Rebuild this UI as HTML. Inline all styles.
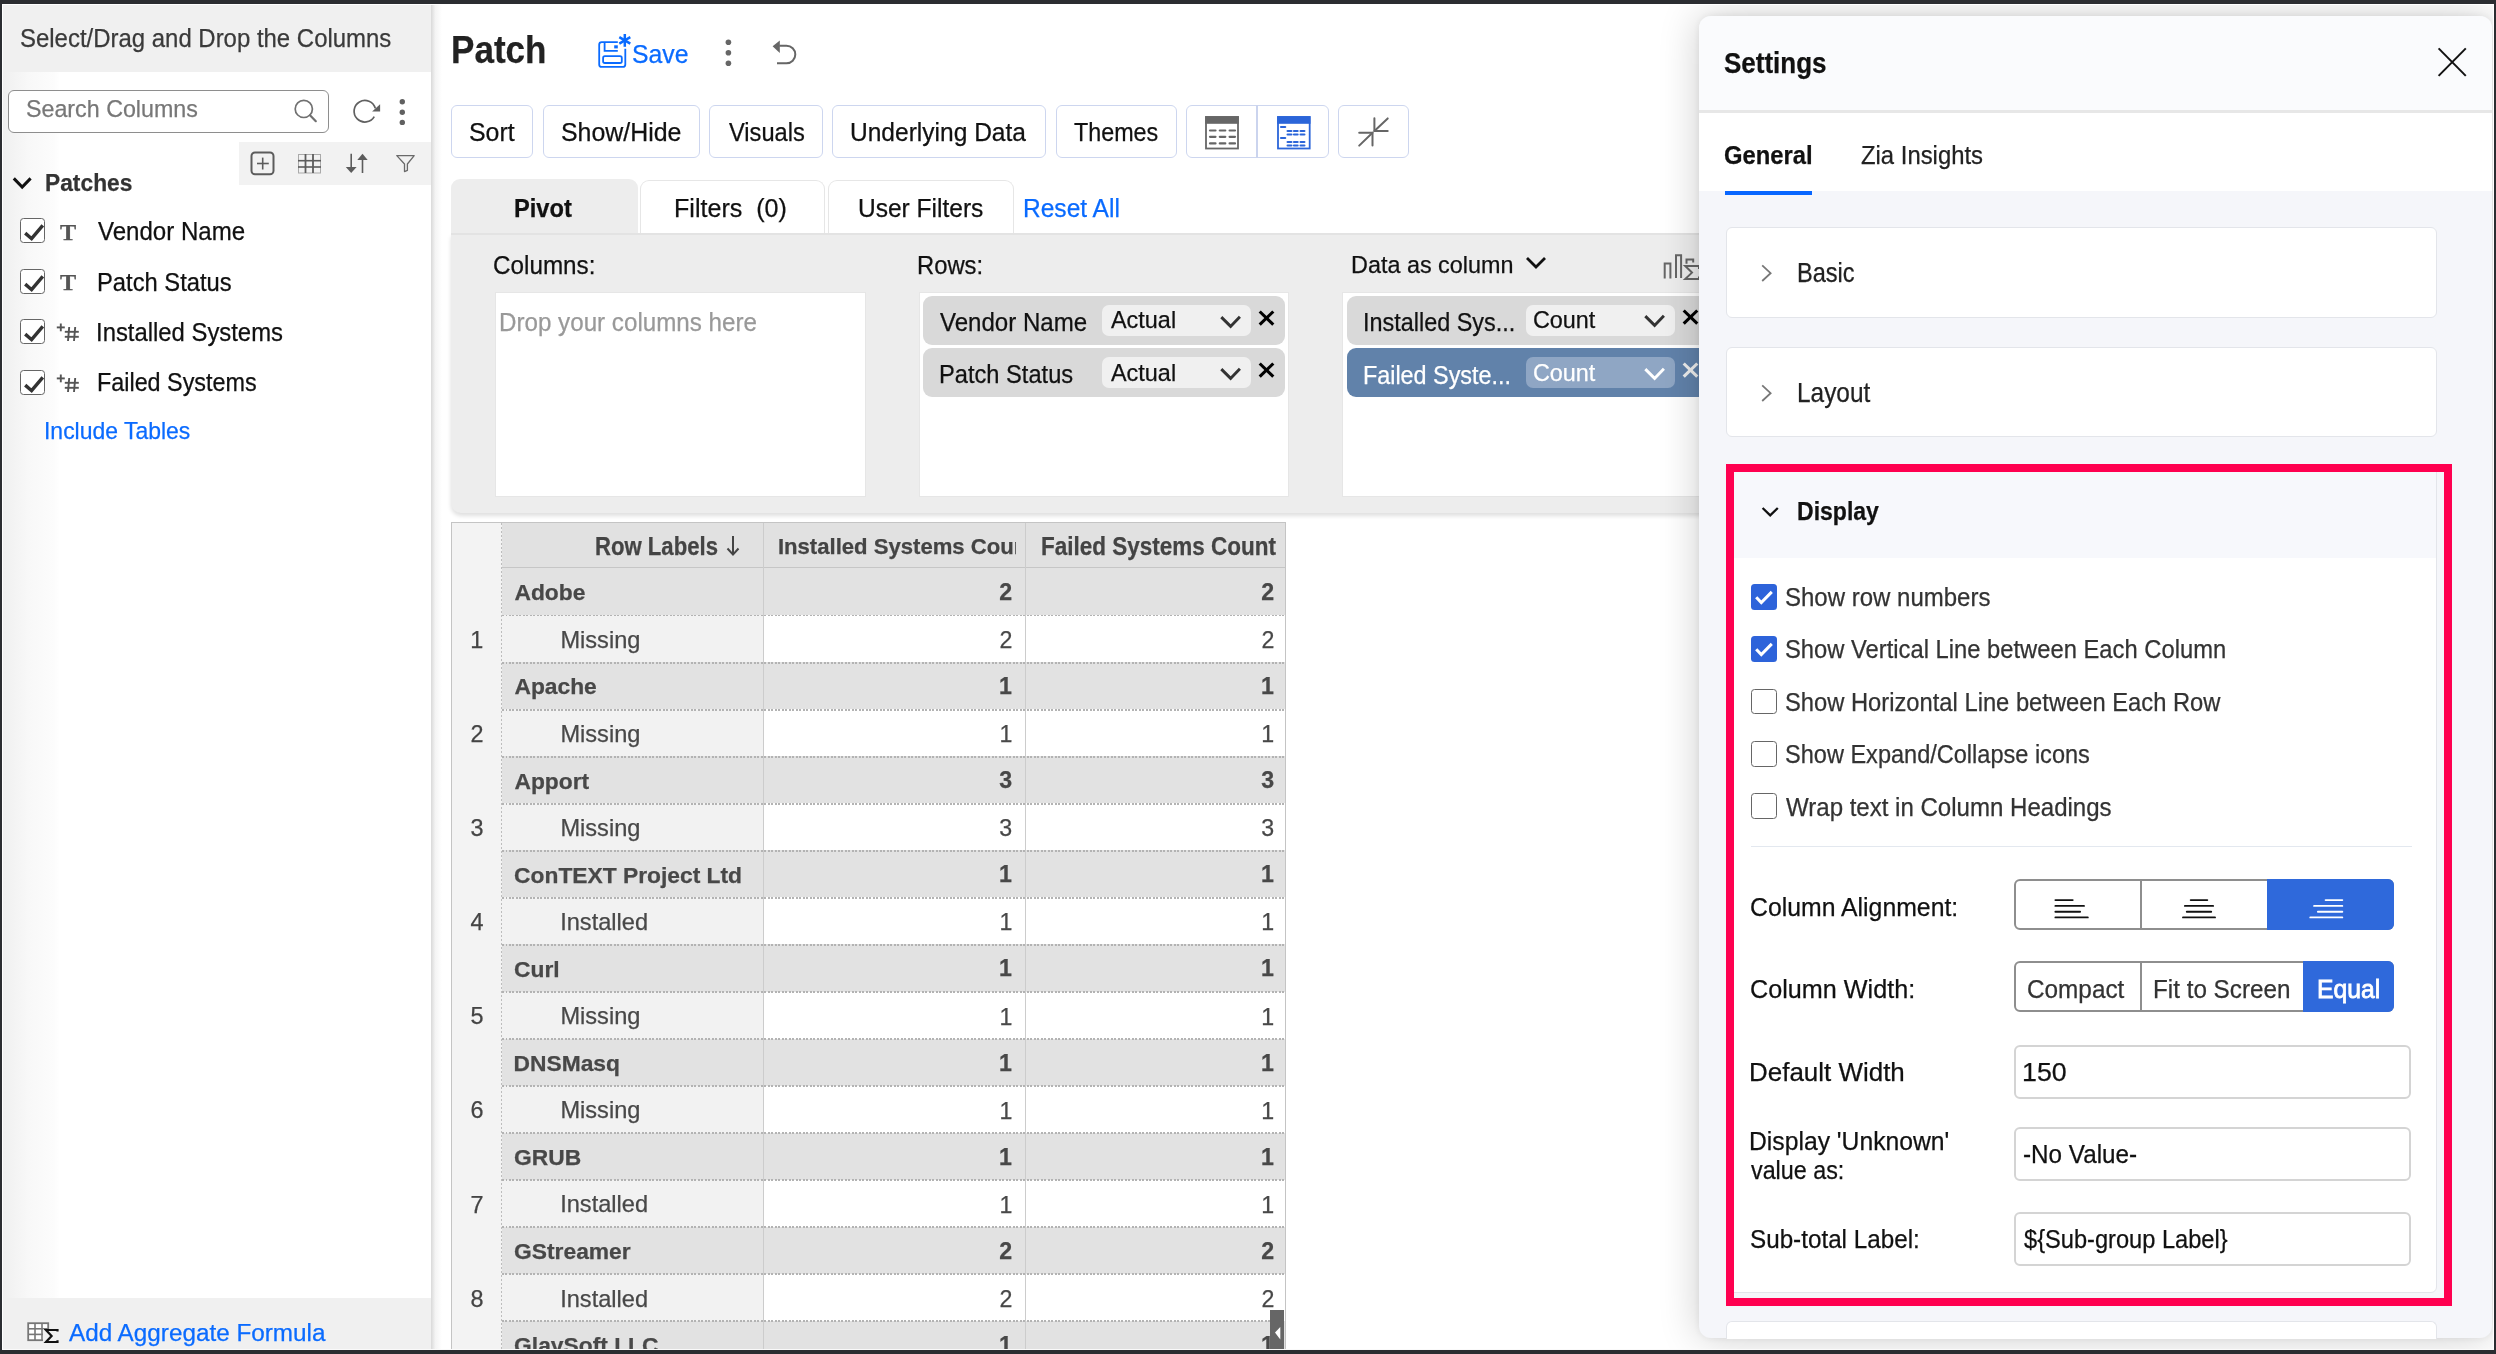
<!DOCTYPE html>
<html><head><meta charset="utf-8"><title>Patch - Pivot Settings</title>
<style>
html,body{margin:0;padding:0;}
body{width:2496px;height:1354px;position:relative;overflow:hidden;background:#fff;font-family:"Liberation Sans",sans-serif;}
#root{position:absolute;left:0;top:0;width:2496px;height:1354px;will-change:transform;}
.r{position:absolute;}
.t{position:absolute;white-space:nowrap;transform-origin:0 0;-webkit-text-stroke:0.25px currentColor;}
</style></head><body><div id="root">
<div class="r" style="left:0.00px;top:0.00px;width:431.00px;height:1354.00px;background:#fff"></div>
<div class="r" style="left:2.00px;top:4.00px;width:429.00px;height:68.00px;background:#f0f0f0"></div>
<div class="r" style="left:2.00px;top:72.00px;width:58.00px;height:1225.60px;background:linear-gradient(to right,#efefef,#f2f2f2 15%,#f8f8f8 45%,#fcfcfc 90%,#fff)"></div>
<div class="t" style="left:20.42px;top:25.75px;font-size:25.58px;line-height:25.58px;color:#3a3a3a;font-weight:normal;font-family:'Liberation Sans', sans-serif;transform:scaleX(0.9361);">Select/Drag and Drop the Columns</div>
<div class="r" style="left:8.00px;top:90.00px;width:320.50px;height:42.50px;border:1.6px solid #8e8e8e;border-radius:6px;box-sizing:border-box;background:#fff"></div>
<div class="t" style="left:25.95px;top:96.78px;font-size:24.71px;line-height:24.71px;color:#777;font-weight:normal;font-family:'Liberation Sans', sans-serif;transform:scaleX(0.9412);">Search Columns</div>
<svg class="r" style="left:292.00px;top:98.00px;width:28.00px;height:26.00px;overflow:visible;" viewBox="0 0 28.00 26.00"><circle cx="11.8" cy="10.9" r="8.6" fill="none" stroke="#707070" stroke-width="1.7"/><line x1="18" y1="17.2" x2="23.8" y2="23.2" stroke="#707070" stroke-width="2.2" stroke-linecap="round"/></svg>
<svg class="r" style="left:350.00px;top:98.00px;width:34.00px;height:28.00px;overflow:visible;" viewBox="0 0 34.00 28.00"><path d="M 24.25 18.6 A 10.8 10.8 0 1 1 25.3 10.4" fill="none" stroke="#606060" stroke-width="1.7"/><polygon points="30.1,6.2 30.1,13.6 22.1,13.6" fill="#606060"/></svg>
<svg class="r" style="left:397.00px;top:96.00px;width:11.00px;height:32.00px;overflow:visible;" viewBox="0 0 11.00 32.00"><circle cx="5.3" cy="5.7" r="2.7" fill="#606060"/><circle cx="5.3" cy="16.2" r="2.7" fill="#606060"/><circle cx="5.3" cy="26.4" r="2.7" fill="#606060"/></svg>
<div class="r" style="left:239.00px;top:142.00px;width:192.00px;height:43.00px;background:#f2f2f2"></div>
<svg class="r" style="left:250.00px;top:151.00px;width:26.00px;height:26.00px;overflow:visible;" viewBox="0 0 26.00 26.00"><rect x="1.5" y="1.5" width="22" height="21.7" rx="3.5" fill="none" stroke="#5c5c5c" stroke-width="2"/><line x1="7" y1="12.5" x2="18.8" y2="12.5" stroke="#5c5c5c" stroke-width="1.6"/><line x1="12.7" y1="6.6" x2="12.7" y2="18.5" stroke="#5c5c5c" stroke-width="1.6"/></svg>
<svg class="r" style="left:298.00px;top:154.00px;width:23.00px;height:19.00px;overflow:visible;" viewBox="0 0 23.00 19.00"><rect x="0.5" y="0.5" width="22" height="18.5" fill="none" stroke="#aaa" stroke-width="1"/><line x1="7.5" y1="0" x2="7.5" y2="19" stroke="#5c5c5c" stroke-width="1.8"/><line x1="15" y1="0" x2="15" y2="19" stroke="#5c5c5c" stroke-width="1.8"/><line x1="0" y1="6.7" x2="23" y2="6.7" stroke="#5c5c5c" stroke-width="1.6"/><line x1="0" y1="13" x2="23" y2="13" stroke="#5c5c5c" stroke-width="1.6"/></svg>
<svg class="r" style="left:344.00px;top:152.00px;width:25.00px;height:24.00px;overflow:visible;" viewBox="0 0 25.00 24.00"><line x1="7.2" y1="1.8" x2="7.2" y2="16" stroke="#5c5c5c" stroke-width="1.6"/><polygon points="1.8,15 12.6,15 7.2,21" fill="#5c5c5c"/><line x1="18.5" y1="7" x2="18.5" y2="21" stroke="#5c5c5c" stroke-width="1.6"/><polygon points="13.3,8 23.7,8 18.5,1.8" fill="#5c5c5c"/></svg>
<svg class="r" style="left:395.00px;top:154.00px;width:21.00px;height:20.00px;overflow:visible;" viewBox="0 0 21.00 20.00"><path d="M 1.8 1.6 L 19.2 1.6 L 12.4 10 L 12.4 16.4 L 9.5 17.6 L 9.5 10 Z" fill="none" stroke="#6a6a6a" stroke-width="1.3" stroke-linejoin="round"/></svg>
<svg class="r" style="left:12.00px;top:176.00px;width:22.00px;height:16.00px;overflow:visible;" viewBox="0 0 22.00 16.00"><polyline points="1.8,2.4 10.2,11 18.6,2.4" fill="none" stroke="#111" stroke-width="3"/></svg>
<div class="t" style="left:45.02px;top:170.88px;font-size:24.71px;line-height:24.71px;color:#333;font-weight:bold;font-family:'Liberation Sans', sans-serif;transform:scaleX(0.9223);">Patches</div>
<div class="r" style="left:19.50px;top:218.10px;width:25.70px;height:25.30px;border:1.7px solid #666;border-radius:3.5px;box-sizing:border-box;background:#fff"></div>
<svg class="r" style="left:19.50px;top:218.10px;width:25.70px;height:25.30px;overflow:visible;" viewBox="0 0 25.70 25.30"><polyline points="5.2,15.1 11.6,20.7 22.8,7.3" fill="none" stroke="#333" stroke-width="3.4"/></svg>
<div class="t" style="left:59.94px;top:221.63px;font-size:22.53px;line-height:22.53px;color:#555;font-weight:bold;font-family:'Liberation Serif', serif;transform:scaleX(1.0765);">T</div>
<div class="t" style="left:98.38px;top:219.19px;font-size:25.29px;line-height:25.29px;color:#111;font-weight:normal;font-family:'Liberation Sans', sans-serif;transform:scaleX(0.9518);">Vendor Name</div>
<div class="r" style="left:19.50px;top:268.65px;width:25.70px;height:25.30px;border:1.7px solid #666;border-radius:3.5px;box-sizing:border-box;background:#fff"></div>
<svg class="r" style="left:19.50px;top:268.65px;width:25.70px;height:25.30px;overflow:visible;" viewBox="0 0 25.70 25.30"><polyline points="5.2,15.1 11.6,20.7 22.8,7.3" fill="none" stroke="#333" stroke-width="3.4"/></svg>
<div class="t" style="left:59.94px;top:272.18px;font-size:22.53px;line-height:22.53px;color:#555;font-weight:bold;font-family:'Liberation Serif', serif;transform:scaleX(1.0765);">T</div>
<div class="t" style="left:96.60px;top:269.59px;font-size:25.29px;line-height:25.29px;color:#111;font-weight:normal;font-family:'Liberation Sans', sans-serif;transform:scaleX(0.9396);">Patch Status</div>
<div class="r" style="left:19.50px;top:319.20px;width:25.70px;height:25.30px;border:1.7px solid #666;border-radius:3.5px;box-sizing:border-box;background:#fff"></div>
<svg class="r" style="left:19.50px;top:319.20px;width:25.70px;height:25.30px;overflow:visible;" viewBox="0 0 25.70 25.30"><polyline points="5.2,15.1 11.6,20.7 22.8,7.3" fill="none" stroke="#333" stroke-width="3.4"/></svg>
<svg class="r" style="left:55.00px;top:319.20px;width:25.00px;height:25.00px;overflow:visible;" viewBox="0 0 25.00 25.00"><g stroke="#555" stroke-width="1.9"><line x1="1.8" y1="8.4" x2="9.8" y2="8.4"/><line x1="5.8" y1="4.5" x2="5.8" y2="12.3"/><line x1="14.2" y1="8" x2="13" y2="22"/><line x1="20.2" y1="8" x2="19" y2="22"/><line x1="9.8" y1="12.8" x2="23.8" y2="12.8"/><line x1="9.8" y1="17.8" x2="23.8" y2="17.8"/></g></svg>
<div class="t" style="left:96.35px;top:319.99px;font-size:25.29px;line-height:25.29px;color:#111;font-weight:normal;font-family:'Liberation Sans', sans-serif;transform:scaleX(0.9436);">Installed Systems</div>
<div class="r" style="left:19.50px;top:369.75px;width:25.70px;height:25.30px;border:1.7px solid #666;border-radius:3.5px;box-sizing:border-box;background:#fff"></div>
<svg class="r" style="left:19.50px;top:369.75px;width:25.70px;height:25.30px;overflow:visible;" viewBox="0 0 25.70 25.30"><polyline points="5.2,15.1 11.6,20.7 22.8,7.3" fill="none" stroke="#333" stroke-width="3.4"/></svg>
<svg class="r" style="left:55.00px;top:369.75px;width:25.00px;height:25.00px;overflow:visible;" viewBox="0 0 25.00 25.00"><g stroke="#555" stroke-width="1.9"><line x1="1.8" y1="8.4" x2="9.8" y2="8.4"/><line x1="5.8" y1="4.5" x2="5.8" y2="12.3"/><line x1="14.2" y1="8" x2="13" y2="22"/><line x1="20.2" y1="8" x2="19" y2="22"/><line x1="9.8" y1="12.8" x2="23.8" y2="12.8"/><line x1="9.8" y1="17.8" x2="23.8" y2="17.8"/></g></svg>
<div class="t" style="left:96.63px;top:370.39px;font-size:25.29px;line-height:25.29px;color:#111;font-weight:normal;font-family:'Liberation Sans', sans-serif;transform:scaleX(0.9238);">Failed Systems</div>
<div class="t" style="left:43.84px;top:419.08px;font-size:24.71px;line-height:24.71px;color:#0a6bff;font-weight:normal;font-family:'Liberation Sans', sans-serif;transform:scaleX(0.9286);">Include Tables</div>
<div class="r" style="left:2.00px;top:1297.60px;width:429.00px;height:52.40px;background:#f0f0f0"></div>
<svg class="r" style="left:27.00px;top:1322.00px;width:33.00px;height:21.00px;overflow:visible;" viewBox="0 0 33.00 21.00"><rect x="1.2" y="1.2" width="20" height="17" fill="#fff" stroke="#777" stroke-width="1.8"/><line x1="8" y1="1" x2="8" y2="18" stroke="#777" stroke-width="1.6"/><line x1="15" y1="1" x2="15" y2="18" stroke="#777" stroke-width="1.6"/><line x1="1" y1="6.8" x2="21" y2="6.8" stroke="#777" stroke-width="1.6"/><line x1="1" y1="12.4" x2="21" y2="12.4" stroke="#777" stroke-width="1.6"/><rect x="16" y="7" width="16" height="14" fill="#f0f0f0"/><path d="M 30.5 9.6 L 30.5 8 L 19 8 L 24.6 14 L 19 20 L 30.5 20 L 30.5 18.2" fill="none" stroke="#111" stroke-width="2.2"/></svg>
<div class="t" style="left:68.70px;top:1321.03px;font-size:24.42px;line-height:24.42px;color:#0a6bff;font-weight:normal;font-family:'Liberation Sans', sans-serif;transform:scaleX(0.9947);">Add Aggregate Formula</div>
<div class="r" style="left:431.00px;top:4.00px;width:11.00px;height:1346.00px;background:linear-gradient(to right,#d9d9d9,#f4f4f4 40%,#fff)"></div>
<div class="t" style="left:451.32px;top:31.36px;font-size:38.08px;line-height:38.08px;color:#222;font-weight:bold;font-family:'Liberation Sans', sans-serif;transform:scaleX(0.9209);">Patch</div>
<svg class="r" style="left:596.00px;top:32.00px;width:38.00px;height:38.00px;overflow:visible;" viewBox="0 0 38.00 38.00"><g fill="none" stroke="#0a6bff" stroke-width="1.8"><path d="M 21.8 10.1 L 5.7 10.1 Q 3.2 10.1 3.2 12.6 L 3.2 32.4 Q 3.2 34.9 5.7 34.9 L 26.8 34.9 Q 29.3 34.9 29.3 32.4 L 29.3 16.8"/><polyline points="8.6,10.1 8.6,18.8 21.8,18.8"/><rect x="7.1" y="24.2" width="18.7" height="6.8" rx="1.8"/></g><rect x="18.2" y="13.3" width="3.6" height="3.1" fill="#0a6bff"/><g stroke="#0a6bff" stroke-width="2.5"><line x1="28.8" y1="2" x2="28.8" y2="14.8"/><line x1="23.3" y1="5.2" x2="34.3" y2="11.6"/><line x1="23.3" y1="11.6" x2="34.3" y2="5.2"/></g></svg>
<div class="t" style="left:632.28px;top:41.75px;font-size:25.58px;line-height:25.58px;color:#0a6bff;font-weight:normal;font-family:'Liberation Sans', sans-serif;transform:scaleX(0.9692);">Save</div>
<svg class="r" style="left:722.00px;top:36.00px;width:13.00px;height:34.00px;overflow:visible;" viewBox="0 0 13.00 34.00"><circle cx="6.4" cy="6.2" r="2.8" fill="#666"/><circle cx="6.4" cy="16.8" r="2.8" fill="#666"/><circle cx="6.4" cy="27.3" r="2.8" fill="#666"/></svg>
<svg class="r" style="left:770.00px;top:36.00px;width:30.00px;height:32.00px;overflow:visible;" viewBox="0 0 30.00 32.00"><path d="M 9.3 9.7 L 16.5 9.7 A 8.8 8.8 0 0 1 16.5 27.3 L 7 27.3" fill="none" stroke="#666" stroke-width="2"/><polygon points="2.6,10.2 9.8,4.6 9.8,16.9" fill="#666"/></svg>
<div class="r" style="left:450.70px;top:105.30px;width:82.70px;height:53.20px;border:1.9px solid #cdd6ef;border-radius:6px;box-sizing:border-box;background:#fff"></div>
<div class="t" style="left:468.58px;top:120.09px;font-size:25.29px;line-height:25.29px;color:#111;font-weight:normal;font-family:'Liberation Sans', sans-serif;transform:scaleX(0.9841);">Sort</div>
<div class="r" style="left:543.30px;top:105.30px;width:156.50px;height:53.20px;border:1.9px solid #cdd6ef;border-radius:6px;box-sizing:border-box;background:#fff"></div>
<div class="t" style="left:560.88px;top:120.09px;font-size:25.29px;line-height:25.29px;color:#111;font-weight:normal;font-family:'Liberation Sans', sans-serif;transform:scaleX(0.9850);">Show/Hide</div>
<div class="r" style="left:709.20px;top:105.30px;width:113.60px;height:53.20px;border:1.9px solid #cdd6ef;border-radius:6px;box-sizing:border-box;background:#fff"></div>
<div class="t" style="left:728.68px;top:120.09px;font-size:25.29px;line-height:25.29px;color:#111;font-weight:normal;font-family:'Liberation Sans', sans-serif;transform:scaleX(0.9357);">Visuals</div>
<div class="r" style="left:832.00px;top:105.30px;width:214.00px;height:53.20px;border:1.9px solid #cdd6ef;border-radius:6px;box-sizing:border-box;background:#fff"></div>
<div class="t" style="left:850.46px;top:120.09px;font-size:25.29px;line-height:25.29px;color:#111;font-weight:normal;font-family:'Liberation Sans', sans-serif;transform:scaleX(0.9708);">Underlying Data</div>
<div class="r" style="left:1055.60px;top:105.30px;width:121.40px;height:53.20px;border:1.9px solid #cdd6ef;border-radius:6px;box-sizing:border-box;background:#fff"></div>
<div class="t" style="left:1073.93px;top:120.09px;font-size:25.29px;line-height:25.29px;color:#111;font-weight:normal;font-family:'Liberation Sans', sans-serif;transform:scaleX(0.9220);">Themes</div>
<div class="r" style="left:1186.40px;top:105.30px;width:142.20px;height:53.20px;border:1.9px solid #cdd6ef;border-radius:6px;box-sizing:border-box;background:#fff"></div>
<div class="r" style="left:1256.20px;top:105.30px;width:1.60px;height:53.20px;background:#cbd4ee"></div>
<svg class="r" style="left:1205.00px;top:115.50px;width:34.00px;height:33.50px;overflow:visible;" viewBox="0 0 34.00 33.50"><rect x="1" y="1" width="32" height="31.5" fill="#fff" stroke="#666" stroke-width="1.8"/><rect x="0.2" y="0.2" width="33.6" height="7.6" fill="#666"/><g stroke="#666" stroke-width="2.2" stroke-linecap="round"><line x1="5" y1="14.5" x2="10.5" y2="14.5"/><line x1="14.8" y1="14.5" x2="20.3" y2="14.5"/><line x1="24.6" y1="14.5" x2="30" y2="14.5"/><line x1="5" y1="20.8" x2="10.5" y2="20.8"/><line x1="14.8" y1="20.8" x2="20.3" y2="20.8"/><line x1="24.6" y1="20.8" x2="30" y2="20.8"/><line x1="5" y1="27.4" x2="10.5" y2="27.4"/><line x1="14.8" y1="27.4" x2="20.3" y2="27.4"/><line x1="24.6" y1="27.4" x2="30" y2="27.4"/></g></svg>
<svg class="r" style="left:1276.80px;top:115.50px;width:33.70px;height:33.50px;overflow:visible;" viewBox="0 0 33.70 33.50"><rect x="1" y="1" width="31.7" height="31.5" fill="#fff" stroke="#2b65d9" stroke-width="1.8"/><rect x="0.2" y="0.2" width="33.3" height="7.6" fill="#2b65d9"/><g stroke="#2b65d9" stroke-width="2.2" stroke-linecap="round"><line x1="4" y1="11" x2="8.2" y2="11"/><line x1="10.6" y1="15" x2="14.4" y2="15"/><line x1="17" y1="15" x2="20.6" y2="15"/><line x1="23.6" y1="15" x2="27.4" y2="15"/><line x1="10.6" y1="18.5" x2="14.4" y2="18.5"/><line x1="17" y1="18.5" x2="20.6" y2="18.5"/><line x1="23.6" y1="18.5" x2="27.4" y2="18.5"/><line x1="4" y1="22" x2="8.2" y2="22"/><line x1="10.6" y1="26" x2="14.4" y2="26"/><line x1="17" y1="26" x2="20.6" y2="26"/><line x1="23.6" y1="26" x2="27.4" y2="26"/><line x1="10.6" y1="29.5" x2="14.4" y2="29.5"/><line x1="17" y1="29.5" x2="20.6" y2="29.5"/><line x1="23.6" y1="29.5" x2="27.4" y2="29.5"/></g></svg>
<div class="r" style="left:1338.40px;top:105.30px;width:70.30px;height:53.20px;border:1.9px solid #cdd6ef;border-radius:6px;box-sizing:border-box;background:#fff"></div>
<svg class="r" style="left:1357.00px;top:116.00px;width:33.00px;height:32.00px;overflow:visible;" viewBox="0 0 33.00 32.00"><g stroke="#666" stroke-width="2" stroke-linecap="round" fill="none"><line x1="2.2" y1="29.6" x2="15.5" y2="16.7"/><polyline points="2.2,16.7 15.5,16.7 15.5,29.6"/><line x1="30.7" y1="2.4" x2="17.4" y2="14.9"/><polyline points="17.4,2.2 17.4,14.9 30.7,14.9"/></g></svg>
<div class="r" style="left:451.00px;top:178.50px;width:187.00px;height:57.50px;background:#ededed;border-radius:9px 9px 0 0"></div>
<div class="r" style="left:640.00px;top:180.40px;width:185.40px;height:55.60px;background:#fff;border:1.9px solid #e6e6e6;border-bottom:none;border-radius:9px 9px 0 0;box-sizing:border-box"></div>
<div class="r" style="left:828.00px;top:180.40px;width:186.40px;height:55.60px;background:#fff;border:1.9px solid #e6e6e6;border-bottom:none;border-radius:9px 9px 0 0;box-sizing:border-box"></div>
<div class="t" style="left:514.46px;top:195.89px;font-size:25.29px;line-height:25.29px;color:#111;font-weight:bold;font-family:'Liberation Sans', sans-serif;transform:scaleX(0.9363);">Pivot</div>
<div class="t" style="left:674.39px;top:195.89px;font-size:25.29px;line-height:25.29px;color:#111;font-weight:normal;font-family:'Liberation Sans', sans-serif;transform:scaleX(0.9924);white-space:pre;">Filters  (0)</div>
<div class="t" style="left:857.66px;top:195.89px;font-size:25.29px;line-height:25.29px;color:#111;font-weight:normal;font-family:'Liberation Sans', sans-serif;transform:scaleX(0.9703);">User Filters</div>
<div class="t" style="left:1022.64px;top:195.89px;font-size:25.29px;line-height:25.29px;color:#0a6bff;font-weight:normal;font-family:'Liberation Sans', sans-serif;transform:scaleX(0.9708);">Reset All</div>
<div class="r" style="left:451.00px;top:233.50px;width:1309.00px;height:279.50px;background:#ededed;border-radius:0 0 10px 10px;box-shadow:0 3px 4px rgba(0,0,0,0.13)"></div>
<div class="r" style="left:451.00px;top:233.00px;width:1309.00px;height:2.20px;background:#e3e3e3"></div>
<div class="t" style="left:492.99px;top:252.75px;font-size:25.58px;line-height:25.58px;color:#111;font-weight:normal;font-family:'Liberation Sans', sans-serif;transform:scaleX(0.9485);">Columns:</div>
<div class="t" style="left:916.70px;top:252.75px;font-size:25.58px;line-height:25.58px;color:#111;font-weight:normal;font-family:'Liberation Sans', sans-serif;transform:scaleX(0.9304);">Rows:</div>
<div class="r" style="left:494.70px;top:292.00px;width:371.00px;height:205.00px;background:#fff;border:1px solid #e6e6e6;box-sizing:border-box"></div>
<div class="t" style="left:498.87px;top:309.59px;font-size:25.29px;line-height:25.29px;color:#999;font-weight:normal;font-family:'Liberation Sans', sans-serif;transform:scaleX(0.9562);">Drop your columns here</div>
<div class="r" style="left:918.60px;top:292.00px;width:370.70px;height:205.00px;background:#fff;border:1px solid #e6e6e6;box-sizing:border-box"></div>
<div class="r" style="left:923.00px;top:296.20px;width:362.30px;height:48.40px;background:#d9d9d9;border-radius:9px"></div>
<div class="t" style="left:940.38px;top:310.39px;font-size:25.29px;line-height:25.29px;color:#111;font-weight:normal;font-family:'Liberation Sans', sans-serif;transform:scaleX(0.9518);">Vendor Name</div>
<div class="r" style="left:1102.40px;top:304.70px;width:148.80px;height:31.20px;background:#f0f0f0;border-radius:7px"></div>
<div class="t" style="left:1111.00px;top:308.48px;font-size:24.71px;line-height:24.71px;color:#111;font-weight:normal;font-family:'Liberation Sans', sans-serif;transform:scaleX(0.9483);">Actual</div>
<svg class="r" style="left:1218.00px;top:314.20px;width:25.00px;height:15.00px;overflow:visible;" viewBox="0 0 25.00 15.00"><polyline points="3.3,3.1 12.6,12.4 21.9,2.7" fill="none" stroke="#333" stroke-width="2.9"/></svg>
<svg class="r" style="left:1256.00px;top:309.20px;width:21.00px;height:19.00px;overflow:visible;" viewBox="0 0 21.00 19.00"><g stroke="#000" stroke-width="3.1"><line x1="3.7" y1="2.5" x2="17.3" y2="15.6"/><line x1="17.3" y1="2.5" x2="3.7" y2="15.6"/></g></svg>
<div class="r" style="left:923.00px;top:348.30px;width:362.30px;height:48.40px;background:#d9d9d9;border-radius:9px"></div>
<div class="t" style="left:938.61px;top:362.49px;font-size:25.29px;line-height:25.29px;color:#111;font-weight:normal;font-family:'Liberation Sans', sans-serif;transform:scaleX(0.9360);">Patch Status</div>
<div class="r" style="left:1102.40px;top:356.80px;width:148.80px;height:31.20px;background:#f0f0f0;border-radius:7px"></div>
<div class="t" style="left:1111.00px;top:360.58px;font-size:24.71px;line-height:24.71px;color:#111;font-weight:normal;font-family:'Liberation Sans', sans-serif;transform:scaleX(0.9483);">Actual</div>
<svg class="r" style="left:1218.00px;top:366.30px;width:25.00px;height:15.00px;overflow:visible;" viewBox="0 0 25.00 15.00"><polyline points="3.3,3.1 12.6,12.4 21.9,2.7" fill="none" stroke="#333" stroke-width="2.9"/></svg>
<svg class="r" style="left:1256.00px;top:361.30px;width:21.00px;height:19.00px;overflow:visible;" viewBox="0 0 21.00 19.00"><g stroke="#000" stroke-width="3.1"><line x1="3.7" y1="2.5" x2="17.3" y2="15.6"/><line x1="17.3" y1="2.5" x2="3.7" y2="15.6"/></g></svg>
<div class="t" style="left:1350.93px;top:252.58px;font-size:24.13px;line-height:24.13px;color:#111;font-weight:normal;font-family:'Liberation Sans', sans-serif;transform:scaleX(0.9691);">Data as column</div>
<svg class="r" style="left:1524.00px;top:255.00px;width:24.00px;height:18.00px;overflow:visible;" viewBox="0 0 24.00 18.00"><polyline points="3,3 12,12 21,3" fill="none" stroke="#111" stroke-width="2.8"/></svg>
<svg class="r" style="left:1662.00px;top:252.00px;width:38.00px;height:30.00px;overflow:visible;" viewBox="0 0 38.00 30.00"><g fill="none" stroke="#666" stroke-width="2"><polyline points="2.7,26.5 2.7,11.4 8.4,11.4 8.4,26.5"/><polyline points="14,26 14,3.2 19.1,3.2 19.1,26"/><path d="M 37 17 L 37 14 L 23.2 14 L 30 20.6 L 23.2 27.1 L 37 27.1 L 37 24.5"/><polyline points="24.5,11.8 24.5,7.6 31.2,7.6 31.2,10.5"/></g></svg>
<div class="r" style="left:1342.00px;top:292.00px;width:418.00px;height:205.00px;background:#fff;border:1px solid #e6e6e6;box-sizing:border-box"></div>
<div class="r" style="left:1347.00px;top:295.80px;width:413.00px;height:48.80px;background:#d9d9d9;border-radius:9px"></div>
<div class="t" style="left:1363.09px;top:310.39px;font-size:25.29px;line-height:25.29px;color:#111;font-weight:normal;font-family:'Liberation Sans', sans-serif;transform:scaleX(0.9259);">Installed Sys...</div>
<div class="r" style="left:1526.00px;top:304.50px;width:149.00px;height:31.20px;background:#f0f0f0;border-radius:7px"></div>
<div class="t" style="left:1533.43px;top:308.48px;font-size:24.71px;line-height:24.71px;color:#111;font-weight:normal;font-family:'Liberation Sans', sans-serif;transform:scaleX(0.9459);">Count</div>
<svg class="r" style="left:1642.00px;top:313.00px;width:25.00px;height:15.00px;overflow:visible;" viewBox="0 0 25.00 15.00"><polyline points="3.3,3.1 12.6,12.4 21.9,2.7" fill="none" stroke="#333" stroke-width="2.9"/></svg>
<svg class="r" style="left:1680.00px;top:308.00px;width:21.00px;height:19.00px;overflow:visible;" viewBox="0 0 21.00 19.00"><g stroke="#000" stroke-width="3.1"><line x1="3.7" y1="2.5" x2="17.3" y2="15.6"/><line x1="17.3" y1="2.5" x2="3.7" y2="15.6"/></g></svg>
<div class="r" style="left:1347.00px;top:348.30px;width:413.00px;height:48.40px;background:#6182aa;border-radius:9px"></div>
<div class="t" style="left:1363.33px;top:362.59px;font-size:25.29px;line-height:25.29px;color:#fff;font-weight:normal;font-family:'Liberation Sans', sans-serif;transform:scaleX(0.9236);">Failed Syste...</div>
<div class="r" style="left:1526.00px;top:357.00px;width:149.00px;height:31.20px;background:#8fa6c4;border-radius:7px"></div>
<div class="t" style="left:1533.43px;top:360.88px;font-size:24.71px;line-height:24.71px;color:#fff;font-weight:normal;font-family:'Liberation Sans', sans-serif;transform:scaleX(0.9459);">Count</div>
<svg class="r" style="left:1642.00px;top:365.50px;width:25.00px;height:15.00px;overflow:visible;" viewBox="0 0 25.00 15.00"><polyline points="3.3,3.1 12.6,12.4 21.9,2.7" fill="none" stroke="#fff" stroke-width="2.9"/></svg>
<svg class="r" style="left:1680.00px;top:360.50px;width:21.00px;height:19.00px;overflow:visible;" viewBox="0 0 21.00 19.00"><g stroke="#eee" stroke-width="3.1"><line x1="3.7" y1="2.5" x2="17.3" y2="15.6"/><line x1="17.3" y1="2.5" x2="3.7" y2="15.6"/></g></svg>
<div class="r" style="left:450.70px;top:522.40px;width:835.80px;height:831.60px;background:#fff;border:1px solid #c4c4c4;border-bottom:none;box-sizing:border-box"></div>
<div class="r" style="left:451.70px;top:523.40px;width:50.00px;height:830.60px;background:#f3f3f3"></div>
<div class="r" style="left:501.70px;top:523.40px;width:783.80px;height:44.60px;background:#e1e1e1"></div>
<div class="r" style="left:501.70px;top:568.00px;width:783.80px;height:47.06px;background:#e2e2e2"></div>
<div class="t" style="left:514.43px;top:581.30px;font-size:22.80px;line-height:22.80px;color:#484848;font-weight:bold;font-family:'Liberation Sans', sans-serif;">Adobe</div>
<div class="t" style="left:999.35px;top:580.96px;font-size:23.20px;line-height:23.20px;color:#484848;font-weight:bold;font-family:'Liberation Sans', sans-serif;">2</div>
<div class="t" style="left:1261.25px;top:580.96px;font-size:23.20px;line-height:23.20px;color:#484848;font-weight:bold;font-family:'Liberation Sans', sans-serif;">2</div>
<div class="r" style="left:501.70px;top:615.06px;width:261.30px;height:47.06px;background:#f2f2f2"></div>
<div class="t" style="left:560.41px;top:628.68px;font-size:23.60px;line-height:23.60px;color:#484848;font-weight:normal;font-family:'Liberation Sans', sans-serif;">Missing</div>
<div class="t" style="left:999.58px;top:629.02px;font-size:23.20px;line-height:23.20px;color:#484848;font-weight:normal;font-family:'Liberation Sans', sans-serif;">2</div>
<div class="t" style="left:1261.48px;top:629.02px;font-size:23.20px;line-height:23.20px;color:#484848;font-weight:normal;font-family:'Liberation Sans', sans-serif;">2</div>
<div class="t" style="left:470.16px;top:628.85px;font-size:23.40px;line-height:23.40px;color:#444;font-weight:normal;font-family:'Liberation Sans', sans-serif;">1</div>
<div class="r" style="left:501.70px;top:662.12px;width:783.80px;height:47.06px;background:#e2e2e2"></div>
<div class="t" style="left:514.43px;top:675.42px;font-size:22.80px;line-height:22.80px;color:#484848;font-weight:bold;font-family:'Liberation Sans', sans-serif;">Apache</div>
<div class="t" style="left:999.00px;top:675.08px;font-size:23.20px;line-height:23.20px;color:#484848;font-weight:bold;font-family:'Liberation Sans', sans-serif;">1</div>
<div class="t" style="left:1260.90px;top:675.08px;font-size:23.20px;line-height:23.20px;color:#484848;font-weight:bold;font-family:'Liberation Sans', sans-serif;">1</div>
<div class="r" style="left:501.70px;top:709.18px;width:261.30px;height:47.06px;background:#f2f2f2"></div>
<div class="t" style="left:560.41px;top:722.80px;font-size:23.60px;line-height:23.60px;color:#484848;font-weight:normal;font-family:'Liberation Sans', sans-serif;">Missing</div>
<div class="t" style="left:999.47px;top:723.14px;font-size:23.20px;line-height:23.20px;color:#484848;font-weight:normal;font-family:'Liberation Sans', sans-serif;">1</div>
<div class="t" style="left:1261.37px;top:723.14px;font-size:23.20px;line-height:23.20px;color:#484848;font-weight:normal;font-family:'Liberation Sans', sans-serif;">1</div>
<div class="t" style="left:470.51px;top:722.97px;font-size:23.40px;line-height:23.40px;color:#444;font-weight:normal;font-family:'Liberation Sans', sans-serif;">2</div>
<div class="r" style="left:501.70px;top:756.24px;width:783.80px;height:47.06px;background:#e2e2e2"></div>
<div class="t" style="left:514.43px;top:769.54px;font-size:22.80px;line-height:22.80px;color:#484848;font-weight:bold;font-family:'Liberation Sans', sans-serif;">Apport</div>
<div class="t" style="left:999.24px;top:769.20px;font-size:23.20px;line-height:23.20px;color:#484848;font-weight:bold;font-family:'Liberation Sans', sans-serif;">3</div>
<div class="t" style="left:1261.14px;top:769.20px;font-size:23.20px;line-height:23.20px;color:#484848;font-weight:bold;font-family:'Liberation Sans', sans-serif;">3</div>
<div class="r" style="left:501.70px;top:803.30px;width:261.30px;height:47.06px;background:#f2f2f2"></div>
<div class="t" style="left:560.41px;top:816.92px;font-size:23.60px;line-height:23.60px;color:#484848;font-weight:normal;font-family:'Liberation Sans', sans-serif;">Missing</div>
<div class="t" style="left:999.35px;top:817.26px;font-size:23.20px;line-height:23.20px;color:#484848;font-weight:normal;font-family:'Liberation Sans', sans-serif;">3</div>
<div class="t" style="left:1261.25px;top:817.26px;font-size:23.20px;line-height:23.20px;color:#484848;font-weight:normal;font-family:'Liberation Sans', sans-serif;">3</div>
<div class="t" style="left:470.51px;top:817.09px;font-size:23.40px;line-height:23.40px;color:#444;font-weight:normal;font-family:'Liberation Sans', sans-serif;">3</div>
<div class="r" style="left:501.70px;top:850.36px;width:783.80px;height:47.06px;background:#e2e2e2"></div>
<div class="t" style="left:514.09px;top:863.66px;font-size:22.80px;line-height:22.80px;color:#484848;font-weight:bold;font-family:'Liberation Sans', sans-serif;">ConTEXT Project Ltd</div>
<div class="t" style="left:999.00px;top:863.32px;font-size:23.20px;line-height:23.20px;color:#484848;font-weight:bold;font-family:'Liberation Sans', sans-serif;">1</div>
<div class="t" style="left:1260.90px;top:863.32px;font-size:23.20px;line-height:23.20px;color:#484848;font-weight:bold;font-family:'Liberation Sans', sans-serif;">1</div>
<div class="r" style="left:501.70px;top:897.42px;width:261.30px;height:47.06px;background:#f2f2f2"></div>
<div class="t" style="left:560.18px;top:911.04px;font-size:23.60px;line-height:23.60px;color:#484848;font-weight:normal;font-family:'Liberation Sans', sans-serif;">Installed</div>
<div class="t" style="left:999.47px;top:911.38px;font-size:23.20px;line-height:23.20px;color:#484848;font-weight:normal;font-family:'Liberation Sans', sans-serif;">1</div>
<div class="t" style="left:1261.37px;top:911.38px;font-size:23.20px;line-height:23.20px;color:#484848;font-weight:normal;font-family:'Liberation Sans', sans-serif;">1</div>
<div class="t" style="left:470.62px;top:911.21px;font-size:23.40px;line-height:23.40px;color:#444;font-weight:normal;font-family:'Liberation Sans', sans-serif;">4</div>
<div class="r" style="left:501.70px;top:944.48px;width:783.80px;height:47.06px;background:#e2e2e2"></div>
<div class="t" style="left:514.09px;top:957.78px;font-size:22.80px;line-height:22.80px;color:#484848;font-weight:bold;font-family:'Liberation Sans', sans-serif;">Curl</div>
<div class="t" style="left:999.00px;top:957.44px;font-size:23.20px;line-height:23.20px;color:#484848;font-weight:bold;font-family:'Liberation Sans', sans-serif;">1</div>
<div class="t" style="left:1260.90px;top:957.44px;font-size:23.20px;line-height:23.20px;color:#484848;font-weight:bold;font-family:'Liberation Sans', sans-serif;">1</div>
<div class="r" style="left:501.70px;top:991.54px;width:261.30px;height:47.06px;background:#f2f2f2"></div>
<div class="t" style="left:560.41px;top:1005.16px;font-size:23.60px;line-height:23.60px;color:#484848;font-weight:normal;font-family:'Liberation Sans', sans-serif;">Missing</div>
<div class="t" style="left:999.47px;top:1005.50px;font-size:23.20px;line-height:23.20px;color:#484848;font-weight:normal;font-family:'Liberation Sans', sans-serif;">1</div>
<div class="t" style="left:1261.37px;top:1005.50px;font-size:23.20px;line-height:23.20px;color:#484848;font-weight:normal;font-family:'Liberation Sans', sans-serif;">1</div>
<div class="t" style="left:470.51px;top:1005.33px;font-size:23.40px;line-height:23.40px;color:#444;font-weight:normal;font-family:'Liberation Sans', sans-serif;">5</div>
<div class="r" style="left:501.70px;top:1038.60px;width:783.80px;height:47.06px;background:#e2e2e2"></div>
<div class="t" style="left:513.52px;top:1051.90px;font-size:22.80px;line-height:22.80px;color:#484848;font-weight:bold;font-family:'Liberation Sans', sans-serif;">DNSMasq</div>
<div class="t" style="left:999.00px;top:1051.56px;font-size:23.20px;line-height:23.20px;color:#484848;font-weight:bold;font-family:'Liberation Sans', sans-serif;">1</div>
<div class="t" style="left:1260.90px;top:1051.56px;font-size:23.20px;line-height:23.20px;color:#484848;font-weight:bold;font-family:'Liberation Sans', sans-serif;">1</div>
<div class="r" style="left:501.70px;top:1085.66px;width:261.30px;height:47.06px;background:#f2f2f2"></div>
<div class="t" style="left:560.41px;top:1099.28px;font-size:23.60px;line-height:23.60px;color:#484848;font-weight:normal;font-family:'Liberation Sans', sans-serif;">Missing</div>
<div class="t" style="left:999.47px;top:1099.62px;font-size:23.20px;line-height:23.20px;color:#484848;font-weight:normal;font-family:'Liberation Sans', sans-serif;">1</div>
<div class="t" style="left:1261.37px;top:1099.62px;font-size:23.20px;line-height:23.20px;color:#484848;font-weight:normal;font-family:'Liberation Sans', sans-serif;">1</div>
<div class="t" style="left:470.39px;top:1099.45px;font-size:23.40px;line-height:23.40px;color:#444;font-weight:normal;font-family:'Liberation Sans', sans-serif;">6</div>
<div class="r" style="left:501.70px;top:1132.72px;width:783.80px;height:47.06px;background:#e2e2e2"></div>
<div class="t" style="left:514.09px;top:1146.02px;font-size:22.80px;line-height:22.80px;color:#484848;font-weight:bold;font-family:'Liberation Sans', sans-serif;">GRUB</div>
<div class="t" style="left:999.00px;top:1145.68px;font-size:23.20px;line-height:23.20px;color:#484848;font-weight:bold;font-family:'Liberation Sans', sans-serif;">1</div>
<div class="t" style="left:1260.90px;top:1145.68px;font-size:23.20px;line-height:23.20px;color:#484848;font-weight:bold;font-family:'Liberation Sans', sans-serif;">1</div>
<div class="r" style="left:501.70px;top:1179.78px;width:261.30px;height:47.06px;background:#f2f2f2"></div>
<div class="t" style="left:560.18px;top:1193.40px;font-size:23.60px;line-height:23.60px;color:#484848;font-weight:normal;font-family:'Liberation Sans', sans-serif;">Installed</div>
<div class="t" style="left:999.47px;top:1193.74px;font-size:23.20px;line-height:23.20px;color:#484848;font-weight:normal;font-family:'Liberation Sans', sans-serif;">1</div>
<div class="t" style="left:1261.37px;top:1193.74px;font-size:23.20px;line-height:23.20px;color:#484848;font-weight:normal;font-family:'Liberation Sans', sans-serif;">1</div>
<div class="t" style="left:470.51px;top:1193.57px;font-size:23.40px;line-height:23.40px;color:#444;font-weight:normal;font-family:'Liberation Sans', sans-serif;">7</div>
<div class="r" style="left:501.70px;top:1226.84px;width:783.80px;height:47.06px;background:#e2e2e2"></div>
<div class="t" style="left:514.09px;top:1240.14px;font-size:22.80px;line-height:22.80px;color:#484848;font-weight:bold;font-family:'Liberation Sans', sans-serif;">GStreamer</div>
<div class="t" style="left:999.35px;top:1239.80px;font-size:23.20px;line-height:23.20px;color:#484848;font-weight:bold;font-family:'Liberation Sans', sans-serif;">2</div>
<div class="t" style="left:1261.25px;top:1239.80px;font-size:23.20px;line-height:23.20px;color:#484848;font-weight:bold;font-family:'Liberation Sans', sans-serif;">2</div>
<div class="r" style="left:501.70px;top:1273.90px;width:261.30px;height:47.06px;background:#f2f2f2"></div>
<div class="t" style="left:560.18px;top:1287.52px;font-size:23.60px;line-height:23.60px;color:#484848;font-weight:normal;font-family:'Liberation Sans', sans-serif;">Installed</div>
<div class="t" style="left:999.58px;top:1287.86px;font-size:23.20px;line-height:23.20px;color:#484848;font-weight:normal;font-family:'Liberation Sans', sans-serif;">2</div>
<div class="t" style="left:1261.48px;top:1287.86px;font-size:23.20px;line-height:23.20px;color:#484848;font-weight:normal;font-family:'Liberation Sans', sans-serif;">2</div>
<div class="t" style="left:470.45px;top:1287.69px;font-size:23.40px;line-height:23.40px;color:#444;font-weight:normal;font-family:'Liberation Sans', sans-serif;">8</div>
<div class="r" style="left:501.70px;top:1320.96px;width:783.80px;height:47.06px;background:#e2e2e2"></div>
<div class="t" style="left:514.09px;top:1334.26px;font-size:22.80px;line-height:22.80px;color:#484848;font-weight:bold;font-family:'Liberation Sans', sans-serif;">GlaySoft LLC</div>
<div class="t" style="left:999.00px;top:1333.92px;font-size:23.20px;line-height:23.20px;color:#484848;font-weight:bold;font-family:'Liberation Sans', sans-serif;">1</div>
<div class="t" style="left:1260.90px;top:1333.92px;font-size:23.20px;line-height:23.20px;color:#484848;font-weight:bold;font-family:'Liberation Sans', sans-serif;">1</div>
<div class="r" style="left:501.70px;top:614.56px;width:783.80px;height:1.90px;background:repeating-linear-gradient(to right,#b3b3b3 0 1.8px,transparent 1.8px 3.5px)"></div>
<div class="r" style="left:501.70px;top:661.62px;width:783.80px;height:1.90px;background:repeating-linear-gradient(to right,#b3b3b3 0 1.8px,transparent 1.8px 3.5px)"></div>
<div class="r" style="left:501.70px;top:708.68px;width:783.80px;height:1.90px;background:repeating-linear-gradient(to right,#b3b3b3 0 1.8px,transparent 1.8px 3.5px)"></div>
<div class="r" style="left:501.70px;top:755.74px;width:783.80px;height:1.90px;background:repeating-linear-gradient(to right,#b3b3b3 0 1.8px,transparent 1.8px 3.5px)"></div>
<div class="r" style="left:501.70px;top:802.80px;width:783.80px;height:1.90px;background:repeating-linear-gradient(to right,#b3b3b3 0 1.8px,transparent 1.8px 3.5px)"></div>
<div class="r" style="left:501.70px;top:849.86px;width:783.80px;height:1.90px;background:repeating-linear-gradient(to right,#b3b3b3 0 1.8px,transparent 1.8px 3.5px)"></div>
<div class="r" style="left:501.70px;top:896.92px;width:783.80px;height:1.90px;background:repeating-linear-gradient(to right,#b3b3b3 0 1.8px,transparent 1.8px 3.5px)"></div>
<div class="r" style="left:501.70px;top:943.98px;width:783.80px;height:1.90px;background:repeating-linear-gradient(to right,#b3b3b3 0 1.8px,transparent 1.8px 3.5px)"></div>
<div class="r" style="left:501.70px;top:991.04px;width:783.80px;height:1.90px;background:repeating-linear-gradient(to right,#b3b3b3 0 1.8px,transparent 1.8px 3.5px)"></div>
<div class="r" style="left:501.70px;top:1038.10px;width:783.80px;height:1.90px;background:repeating-linear-gradient(to right,#b3b3b3 0 1.8px,transparent 1.8px 3.5px)"></div>
<div class="r" style="left:501.70px;top:1085.16px;width:783.80px;height:1.90px;background:repeating-linear-gradient(to right,#b3b3b3 0 1.8px,transparent 1.8px 3.5px)"></div>
<div class="r" style="left:501.70px;top:1132.22px;width:783.80px;height:1.90px;background:repeating-linear-gradient(to right,#b3b3b3 0 1.8px,transparent 1.8px 3.5px)"></div>
<div class="r" style="left:501.70px;top:1179.28px;width:783.80px;height:1.90px;background:repeating-linear-gradient(to right,#b3b3b3 0 1.8px,transparent 1.8px 3.5px)"></div>
<div class="r" style="left:501.70px;top:1226.34px;width:783.80px;height:1.90px;background:repeating-linear-gradient(to right,#b3b3b3 0 1.8px,transparent 1.8px 3.5px)"></div>
<div class="r" style="left:501.70px;top:1273.40px;width:783.80px;height:1.90px;background:repeating-linear-gradient(to right,#b3b3b3 0 1.8px,transparent 1.8px 3.5px)"></div>
<div class="r" style="left:501.70px;top:1320.46px;width:783.80px;height:1.90px;background:repeating-linear-gradient(to right,#b3b3b3 0 1.8px,transparent 1.8px 3.5px)"></div>
<div class="r" style="left:501.70px;top:567.00px;width:783.80px;height:1.30px;background:#c6c6c6"></div>
<div class="r" style="left:501.20px;top:523.40px;width:1.30px;height:830.60px;background:repeating-linear-gradient(to bottom,#bdbdbd 0 2px,transparent 2px 4px)"></div>
<div class="r" style="left:763.00px;top:523.40px;width:1.30px;height:830.60px;background:#cccccc"></div>
<div class="r" style="left:1024.80px;top:523.40px;width:1.30px;height:830.60px;background:#cccccc"></div>
<div class="t" style="left:595.36px;top:533.64px;font-size:25.00px;line-height:25.00px;color:#444;font-weight:bold;font-family:'Liberation Sans', sans-serif;transform:scaleX(0.8851);">Row Labels</div>
<svg class="r" style="left:724.00px;top:534.00px;width:18.00px;height:24.00px;overflow:visible;" viewBox="0 0 18.00 24.00"><line x1="9" y1="2" x2="9" y2="20" stroke="#444" stroke-width="2"/><polyline points="3.5,14.5 9,20.6 14.5,14.5" fill="none" stroke="#444" stroke-width="2"/></svg>
<div class="r" style="left:763px;top:523px;width:253px;height:45px;overflow:hidden">
<div class="t" style="left:14.96px;top:13.09px;font-size:22.10px;line-height:22.10px;color:#444;font-weight:bold;font-family:'Liberation Sans', sans-serif;">Installed Systems Count</div>
</div>
<div class="t" style="left:1040.84px;top:533.64px;font-size:25.00px;line-height:25.00px;color:#444;font-weight:bold;font-family:'Liberation Sans', sans-serif;transform:scaleX(0.8999);">Failed Systems Count</div>
<div class="r" style="left:1270.20px;top:1310.20px;width:13.40px;height:43.80px;background:#666"></div>
<svg class="r" style="left:1274.00px;top:1326.00px;width:8.00px;height:15.00px;overflow:visible;" viewBox="0 0 8.00 15.00"><polygon points="1,6.6 6.3,1 6.3,13.6" fill="#fff"/></svg>
<div class="r" style="left:1699.00px;top:15.80px;width:793.20px;height:1322.70px;background:#f5f6fa;border-radius:12px;box-shadow:0 0 40px rgba(0,0,0,0.20),0 0 8px rgba(0,0,0,0.07)"></div>
<div class="r" style="left:1699.00px;top:15.80px;width:793.20px;height:94.20px;background:#fafbfd;border-radius:12px 12px 0 0"></div>
<div class="r" style="left:1699.00px;top:110.00px;width:793.20px;height:2.60px;background:#e7e7e7"></div>
<div class="r" style="left:1699.00px;top:112.60px;width:793.20px;height:78.40px;background:#fff"></div>
<div class="t" style="left:1724.22px;top:49.24px;font-size:28.78px;line-height:28.78px;color:#111;font-weight:bold;font-family:'Liberation Sans', sans-serif;transform:scaleX(0.9039);">Settings</div>
<svg class="r" style="left:2436.00px;top:46.00px;width:32.00px;height:32.00px;overflow:visible;" viewBox="0 0 32.00 32.00"><g stroke="#111" stroke-width="2"><line x1="2.6" y1="2.4" x2="29.8" y2="29.9"/><line x1="29.8" y1="2.4" x2="2.6" y2="29.9"/></g></svg>
<div class="t" style="left:1724.05px;top:141.65px;font-size:26.16px;line-height:26.16px;color:#111;font-weight:bold;font-family:'Liberation Sans', sans-serif;transform:scaleX(0.9093);">General</div>
<div class="t" style="left:1860.78px;top:141.65px;font-size:26.16px;line-height:26.16px;color:#222;font-weight:normal;font-family:'Liberation Sans', sans-serif;transform:scaleX(0.9120);">Zia Insights</div>
<div class="r" style="left:1725.00px;top:190.90px;width:87.00px;height:4.10px;background:#0866ff"></div>
<div class="r" style="left:1725.80px;top:227.30px;width:711.60px;height:91.00px;background:#fff;border:1.3px solid #e3e5ea;border-radius:6px;box-sizing:border-box"></div>
<svg class="r" style="left:1758.00px;top:262.00px;width:18.00px;height:22.00px;overflow:visible;" viewBox="0 0 18.00 22.00"><polyline points="4.2,3.4 12.6,11.2 4.2,19" fill="none" stroke="#777" stroke-width="1.8"/></svg>
<div class="t" style="left:1797.11px;top:260.01px;font-size:27.03px;line-height:27.03px;color:#222;font-weight:normal;font-family:'Liberation Sans', sans-serif;transform:scaleX(0.8726);">Basic</div>
<div class="r" style="left:1725.80px;top:347.00px;width:711.60px;height:90.30px;background:#fff;border:1.3px solid #e3e5ea;border-radius:6px;box-sizing:border-box"></div>
<svg class="r" style="left:1758.00px;top:381.50px;width:18.00px;height:22.00px;overflow:visible;" viewBox="0 0 18.00 22.00"><polyline points="4.2,3.4 12.6,11.2 4.2,19" fill="none" stroke="#777" stroke-width="1.8"/></svg>
<div class="t" style="left:1797.05px;top:379.71px;font-size:27.03px;line-height:27.03px;color:#222;font-weight:normal;font-family:'Liberation Sans', sans-serif;transform:scaleX(0.9035);">Layout</div>
<div class="r" style="left:1725.80px;top:464.00px;width:711.60px;height:829.00px;background:#fff;border:1.3px solid #e3e5ea;border-radius:6px;box-sizing:border-box"></div>
<div class="r" style="left:1727.00px;top:465.00px;width:709.20px;height:92.80px;background:#f7f8fc;border-radius:6px 6px 0 0"></div>
<svg class="r" style="left:1760.00px;top:504.00px;width:20.00px;height:17.00px;overflow:visible;" viewBox="0 0 20.00 17.00"><polyline points="2.6,4 10.2,11.4 17.8,4" fill="none" stroke="#111" stroke-width="2.3"/></svg>
<div class="t" style="left:1797.40px;top:498.41px;font-size:26.45px;line-height:26.45px;color:#111;font-weight:bold;font-family:'Liberation Sans', sans-serif;transform:scaleX(0.8710);">Display</div>
<div class="r" style="left:1751.00px;top:583.80px;width:26.00px;height:25.90px;background:#2d63da;border-radius:3.5px"></div>
<svg class="r" style="left:1751.00px;top:583.80px;width:26.00px;height:25.90px;overflow:visible;" viewBox="0 0 26.00 25.90"><polyline points="5.2,13.2 10.3,18.6 20.8,7.9" fill="none" stroke="#fff" stroke-width="3"/></svg>
<div class="t" style="left:1784.92px;top:585.04px;font-size:25.00px;line-height:25.00px;color:#333;font-weight:normal;font-family:'Liberation Sans', sans-serif;transform:scaleX(0.9599);">Show row numbers</div>
<div class="r" style="left:1751.00px;top:636.15px;width:26.00px;height:25.90px;background:#2d63da;border-radius:3.5px"></div>
<svg class="r" style="left:1751.00px;top:636.15px;width:26.00px;height:25.90px;overflow:visible;" viewBox="0 0 26.00 25.90"><polyline points="5.2,13.2 10.3,18.6 20.8,7.9" fill="none" stroke="#fff" stroke-width="3"/></svg>
<div class="t" style="left:1784.93px;top:637.49px;font-size:25.00px;line-height:25.00px;color:#333;font-weight:normal;font-family:'Liberation Sans', sans-serif;transform:scaleX(0.9504);">Show Vertical Line between Each Column</div>
<div class="r" style="left:1751.00px;top:688.50px;width:26.00px;height:25.90px;background:#fff;border:1.6px solid #666;border-radius:3.5px;box-sizing:border-box"></div>
<div class="t" style="left:1784.93px;top:689.94px;font-size:25.00px;line-height:25.00px;color:#333;font-weight:normal;font-family:'Liberation Sans', sans-serif;transform:scaleX(0.9495);">Show Horizontal Line between Each Row</div>
<div class="r" style="left:1751.00px;top:740.85px;width:26.00px;height:25.90px;background:#fff;border:1.6px solid #666;border-radius:3.5px;box-sizing:border-box"></div>
<div class="t" style="left:1784.94px;top:742.39px;font-size:25.00px;line-height:25.00px;color:#333;font-weight:normal;font-family:'Liberation Sans', sans-serif;transform:scaleX(0.9414);">Show Expand/Collapse icons</div>
<div class="r" style="left:1751.00px;top:793.20px;width:26.00px;height:25.90px;background:#fff;border:1.6px solid #666;border-radius:3.5px;box-sizing:border-box"></div>
<div class="t" style="left:1785.88px;top:794.84px;font-size:25.00px;line-height:25.00px;color:#333;font-weight:normal;font-family:'Liberation Sans', sans-serif;transform:scaleX(0.9617);">Wrap text in Column Headings</div>
<div class="r" style="left:1751.00px;top:845.50px;width:661.00px;height:1.30px;background:#e3e8ef"></div>
<div class="t" style="left:1750.16px;top:894.65px;font-size:25.58px;line-height:25.58px;color:#111;font-weight:normal;font-family:'Liberation Sans', sans-serif;transform:scaleX(0.9699);">Column Alignment:</div>
<div class="r" style="left:2013.50px;top:878.70px;width:380.80px;height:51.30px;background:#fff;border:2px solid #8e8e8e;border-radius:6px;box-sizing:border-box"></div>
<div class="r" style="left:2139.70px;top:878.70px;width:1.90px;height:51.30px;background:#8e8e8e"></div>
<div class="r" style="left:2267.00px;top:878.70px;width:127.30px;height:51.30px;background:#2f69db;border-radius:0 6px 6px 0"></div>
<svg class="r" style="left:2040.00px;top:880.00px;width:320.00px;height:50.00px;overflow:visible;" viewBox="0 0 320.00 50.00"><line x1="15.4" y1="20.1" x2="32.7" y2="20.1" stroke="#111" stroke-width="1.9" stroke-linecap="round"/><line x1="15.4" y1="25.9" x2="44.0" y2="25.9" stroke="#111" stroke-width="1.9" stroke-linecap="round"/><line x1="15.4" y1="31.7" x2="40.1" y2="31.7" stroke="#111" stroke-width="1.9" stroke-linecap="round"/><line x1="15.4" y1="37.4" x2="47.8" y2="37.4" stroke="#111" stroke-width="1.9" stroke-linecap="round"/></svg>
<svg class="r" style="left:2040.00px;top:880.00px;width:320.00px;height:50.00px;overflow:visible;" viewBox="0 0 320.00 50.00"><line x1="150.7" y1="20.1" x2="167.3" y2="20.1" stroke="#111" stroke-width="1.9" stroke-linecap="round"/><line x1="144.9" y1="25.9" x2="173.1" y2="25.9" stroke="#111" stroke-width="1.9" stroke-linecap="round"/><line x1="146.8" y1="31.7" x2="171.2" y2="31.7" stroke="#111" stroke-width="1.9" stroke-linecap="round"/><line x1="143.0" y1="37.4" x2="175.0" y2="37.4" stroke="#111" stroke-width="1.9" stroke-linecap="round"/></svg>
<svg class="r" style="left:2040.00px;top:880.00px;width:320.00px;height:50.00px;overflow:visible;" viewBox="0 0 320.00 50.00"><line x1="285.6" y1="20.1" x2="302.3" y2="20.1" stroke="#fff" stroke-width="1.9" stroke-linecap="round"/><line x1="274.1" y1="25.9" x2="302.3" y2="25.9" stroke="#fff" stroke-width="1.9" stroke-linecap="round"/><line x1="277.9" y1="31.7" x2="302.3" y2="31.7" stroke="#fff" stroke-width="1.9" stroke-linecap="round"/><line x1="270.3" y1="37.4" x2="302.3" y2="37.4" stroke="#fff" stroke-width="1.9" stroke-linecap="round"/></svg>
<div class="t" style="left:1750.14px;top:977.25px;font-size:25.58px;line-height:25.58px;color:#111;font-weight:normal;font-family:'Liberation Sans', sans-serif;transform:scaleX(0.9847);">Column Width:</div>
<div class="r" style="left:2013.50px;top:960.60px;width:380.80px;height:51.40px;background:#fff;border:2px solid #8e8e8e;border-radius:6px;box-sizing:border-box"></div>
<div class="r" style="left:2139.70px;top:960.60px;width:1.90px;height:51.40px;background:#8e8e8e"></div>
<div class="r" style="left:2303.00px;top:960.60px;width:91.30px;height:51.40px;background:#2f69db;border-radius:0 6px 6px 0"></div>
<div class="t" style="left:2027.18px;top:977.49px;font-size:25.29px;line-height:25.29px;color:#333;font-weight:normal;font-family:'Liberation Sans', sans-serif;transform:scaleX(0.9622);">Compact</div>
<div class="t" style="left:2153.06px;top:977.49px;font-size:25.29px;line-height:25.29px;color:#333;font-weight:normal;font-family:'Liberation Sans', sans-serif;transform:scaleX(0.9590);">Fit to Screen</div>
<div class="t" style="left:2316.82px;top:977.49px;font-size:25.29px;line-height:25.29px;color:#fff;font-weight:normal;font-family:'Liberation Sans', sans-serif;transform:scaleX(0.9762);-webkit-text-stroke:0.8px #fff;">Equal</div>
<div class="r" style="left:2013.50px;top:1044.70px;width:397.50px;height:54.00px;background:#fff;border:2px solid #d4d4d4;border-radius:6px;box-sizing:border-box"></div>
<div class="t" style="left:2021.99px;top:1059.95px;font-size:25.58px;line-height:25.58px;color:#111;font-weight:normal;font-family:'Liberation Sans', sans-serif;transform:scaleX(1.0458);">150</div>
<div class="r" style="left:2013.50px;top:1126.60px;width:397.50px;height:54.00px;background:#fff;border:2px solid #d4d4d4;border-radius:6px;box-sizing:border-box"></div>
<div class="t" style="left:2022.91px;top:1141.85px;font-size:25.58px;line-height:25.58px;color:#111;font-weight:normal;font-family:'Liberation Sans', sans-serif;transform:scaleX(0.9477);">-No Value-</div>
<div class="r" style="left:2013.50px;top:1211.90px;width:397.50px;height:54.00px;background:#fff;border:2px solid #d4d4d4;border-radius:6px;box-sizing:border-box"></div>
<div class="t" style="left:2023.76px;top:1227.45px;font-size:25.58px;line-height:25.58px;color:#111;font-weight:normal;font-family:'Liberation Sans', sans-serif;transform:scaleX(0.9238);">${Sub-group Label}</div>
<div class="t" style="left:1749.32px;top:1059.95px;font-size:25.58px;line-height:25.58px;color:#111;font-weight:normal;font-family:'Liberation Sans', sans-serif;transform:scaleX(1.0148);">Default Width</div>
<div class="t" style="left:1749.42px;top:1129.15px;font-size:25.58px;line-height:25.58px;color:#111;font-weight:normal;font-family:'Liberation Sans', sans-serif;transform:scaleX(0.9656);">Display 'Unknown'</div>
<div class="t" style="left:1751.28px;top:1157.85px;font-size:25.58px;line-height:25.58px;color:#111;font-weight:normal;font-family:'Liberation Sans', sans-serif;transform:scaleX(0.9110);">value as:</div>
<div class="t" style="left:1750.31px;top:1227.45px;font-size:25.58px;line-height:25.58px;color:#111;font-weight:normal;font-family:'Liberation Sans', sans-serif;transform:scaleX(0.9475);">Sub-total Label:</div>
<div class="r" style="left:1726.00px;top:464.30px;width:726.00px;height:841.70px;border:8.4px solid #ff0050;box-sizing:border-box"></div>
<div class="r" style="left:1725.80px;top:1321.00px;width:711.60px;height:17.50px;background:#fff;border:1.3px solid #e3e5ea;border-bottom:none;border-radius:6px 6px 0 0;box-sizing:border-box"></div>
<div class="r" style="left:2.00px;top:4.00px;width:1.00px;height:1346.00px;background:#fff"></div>
<div class="r" style="left:2.00px;top:4.00px;width:2492.00px;height:1.00px;background:#fff"></div>
<div class="r" style="left:2493.00px;top:4.00px;width:1.00px;height:1346.00px;background:#fff"></div>
<div class="r" style="left:2.00px;top:1349.00px;width:2492.00px;height:1.00px;background:#fafafa"></div>
<div class="r" style="left:0.00px;top:0.00px;width:2496.00px;height:4.00px;background:#2b2d31"></div>
<div class="r" style="left:0.00px;top:1350.00px;width:2496.00px;height:4.00px;background:#2b2d31"></div>
<div class="r" style="left:0.00px;top:0.00px;width:2.00px;height:1354.00px;background:#2b2d31"></div>
<div class="r" style="left:2494.00px;top:0.00px;width:2.00px;height:1354.00px;background:#2b2d31"></div>
</div></body></html>
